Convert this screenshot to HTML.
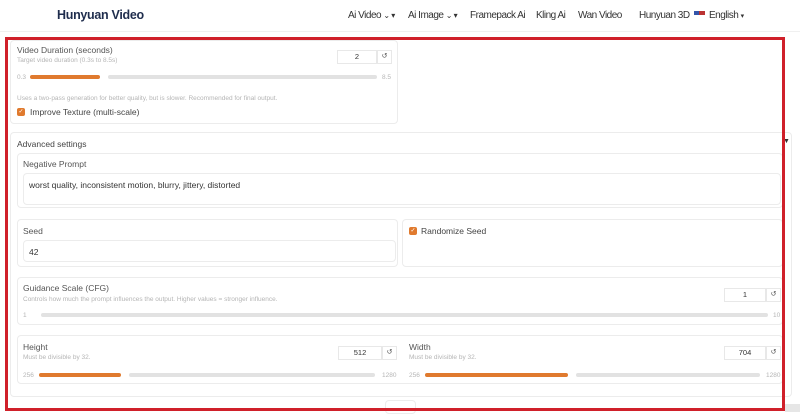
<!DOCTYPE html>
<html><head><meta charset="utf-8"><style>
*{box-sizing:border-box;margin:0;padding:0}
body{width:800px;height:412px;overflow:hidden;background:#fff;font-family:"Liberation Sans",sans-serif;position:relative;color:#333}
.a{position:absolute;white-space:nowrap}
.nav{font-size:10px;letter-spacing:-0.5px;color:#333;top:10px}
.box{position:absolute;border:1px solid #ececec;border-radius:4px;background:#fff}
.lab{font-size:8.5px;color:#555}
.sub{font-size:6.5px;color:#b5b5b5}
.tr{position:absolute;height:4px;background:#e2e2e2;border-radius:2px}
.or{position:absolute;height:4px;background:#e07a2e;border-radius:2px}
.num{position:absolute;border:1px solid #e8e8e8;height:14px;font-size:7.5px;text-align:center;line-height:12px;color:#333}
.rs{position:absolute;border:1px solid #e8e8e8;height:14px;width:15px;font-size:7px;text-align:center;line-height:12px;color:#555}
.cb{position:absolute;width:8px;height:8px;background:#e07a2e;border-radius:2px;color:#fff;font-size:6px;line-height:8px;text-align:center}
</style></head><body>
<div class="a" style="left:57px;top:8px;font-size:12.5px;font-weight:bold;color:#1f2d4d;letter-spacing:-0.3px">Hunyuan Video</div>
<div class="a nav" style="left:348px">Ai Video <span style="font-size:8px">⌄ ▾</span></div>
<div class="a nav" style="left:408px">Ai Image <span style="font-size:8px">⌄ ▾</span></div>
<div class="a nav" style="left:470px">Framepack Ai</div>
<div class="a nav" style="left:536px">Kling Ai</div>
<div class="a nav" style="left:578px">Wan Video</div>
<div class="a nav" style="left:639px">Hunyuan 3D</div>
<div class="a" style="left:694px;top:11px;width:11px;height:8px;background:linear-gradient(#b33 0 50%,#fff 50%);"><div style="width:5px;height:4px;background:#35a"></div></div>
<div class="a nav" style="left:709px">English <span style="font-size:7px">▾</span></div>
<div class="a" style="left:0;top:31px;width:800px;height:1px;background:#f0f0f0"></div>

<div class="box" style="left:10px;top:40px;width:388px;height:84px"></div>
<div class="a lab" style="left:17px;top:45px">Video Duration (seconds)</div>
<div class="a sub" style="left:17px;top:57px">Target video duration (0.3s to 8.5s)</div>
<div class="num" style="left:337px;top:50px;width:40px">2</div><div class="rs" style="left:377px;top:50px">↺</div>
<div class="a sub" style="left:17px;top:74px">0.3</div>
<div class="or" style="left:30px;top:75px;width:70px"></div>
<div class="tr" style="left:108px;top:75px;width:269px"></div>
<div class="a sub" style="left:382px;top:74px">8.5</div>
<div class="a sub" style="left:17px;top:95px">Uses a two-pass generation for better quality, but is slower. Recommended for final output.</div>
<div class="cb" style="left:17px;top:108px">✓</div>
<div class="a lab" style="left:30px;top:107px;color:#444">Improve Texture (multi-scale)</div>

<div class="box" style="left:10px;top:132px;width:782px;height:265px"></div>
<div class="a lab" style="left:17px;top:139px;color:#444">Advanced settings</div>
<div class="a" style="left:783px;top:138px;font-size:7px">▼</div>
<div class="box" style="left:17px;top:153px;width:766px;height:55px"></div>
<div class="a lab" style="left:23px;top:159px">Negative Prompt</div>
<div class="box" style="left:23px;top:173px;width:758px;height:32px"></div>
<div class="a" style="left:29px;top:180px;font-size:8.5px;color:#333">worst quality, inconsistent motion, blurry, jittery, distorted</div>

<div class="box" style="left:17px;top:219px;width:381px;height:48px"></div>
<div class="a lab" style="left:23px;top:226px">Seed</div>
<div class="box" style="left:23px;top:240px;width:373px;height:22px"></div>
<div class="a" style="left:29px;top:247px;font-size:8.5px">42</div>
<div class="box" style="left:402px;top:219px;width:381px;height:48px"></div>
<div class="cb" style="left:409px;top:227px">✓</div>
<div class="a lab" style="left:421px;top:226px;color:#444">Randomize Seed</div>

<div class="box" style="left:17px;top:277px;width:766px;height:48px"></div>
<div class="a lab" style="left:23px;top:283px">Guidance Scale (CFG)</div>
<div class="a sub" style="left:23px;top:296px">Controls how much the prompt influences the output. Higher values = stronger influence.</div>
<div class="num" style="left:724px;top:288px;width:42px">1</div><div class="rs" style="left:766px;top:288px">↺</div>
<div class="a sub" style="left:23px;top:312px">1</div>
<div class="tr" style="left:41px;top:313px;width:727px"></div>
<div class="a sub" style="left:773px;top:312px">10</div>

<div class="box" style="left:17px;top:335px;width:766px;height:49px"></div>
<div class="a lab" style="left:23px;top:342px">Height</div>
<div class="a sub" style="left:23px;top:354px">Must be divisible by 32.</div>
<div class="num" style="left:338px;top:346px;width:44px">512</div><div class="rs" style="left:382px;top:346px">↺</div>
<div class="a sub" style="left:23px;top:372px">256</div>
<div class="or" style="left:39px;top:373px;width:82px"></div>
<div class="tr" style="left:129px;top:373px;width:246px"></div>
<div class="a sub" style="left:382px;top:372px">1280</div>
<div class="a lab" style="left:409px;top:342px">Width</div>
<div class="a sub" style="left:409px;top:354px">Must be divisible by 32.</div>
<div class="num" style="left:724px;top:346px;width:42px">704</div><div class="rs" style="left:766px;top:346px">↺</div>
<div class="a sub" style="left:409px;top:372px">256</div>
<div class="or" style="left:425px;top:373px;width:143px"></div>
<div class="tr" style="left:576px;top:373px;width:184px"></div>
<div class="a sub" style="left:766px;top:372px">1280</div>
<div class="box" style="left:385px;top:400px;width:31px;height:14px"></div>
<div class="a" style="left:785px;top:404px;width:15px;height:8px;background:#e6e6e6"></div>

<div class="a" style="left:5px;top:37px;width:780px;height:374px;border:3px solid #d0202a"></div>
</body></html>
